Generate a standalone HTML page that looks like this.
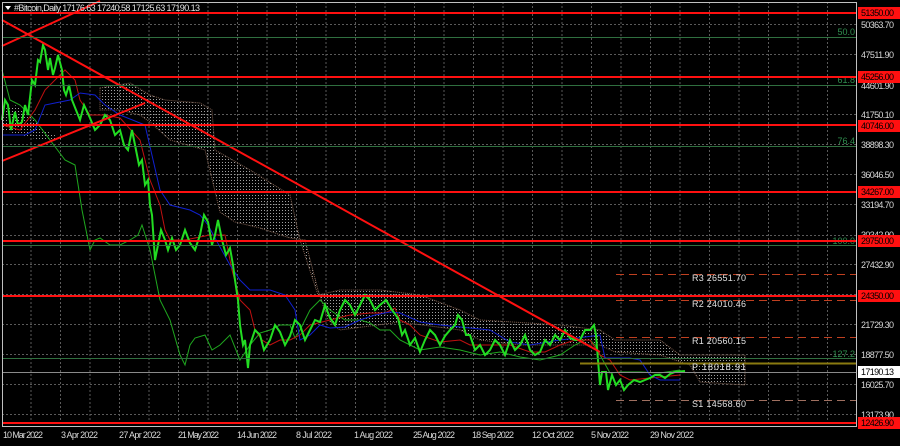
<!DOCTYPE html><html><head><style>
body{margin:0;background:#000;width:900px;height:441px;overflow:hidden;font-family:"Liberation Sans",sans-serif}
svg text{font-family:"Liberation Sans",sans-serif;font-size:9px}
</style></head><body>
<svg width="900" height="441" xmlns="http://www.w3.org/2000/svg">
<defs>
<pattern id="dots" width="3" height="3" patternUnits="userSpaceOnUse"><rect width="1" height="1" fill="#a0a0a0"/></pattern>
</defs>
<rect width="900" height="441" fill="#000"/>
<g stroke="#5a5a5a" stroke-dasharray="2,2" stroke-width="1">
<line x1="2" y1="24.5" x2="856" y2="24.5"/><line x1="2" y1="54.5" x2="856" y2="54.5"/><line x1="2" y1="85.5" x2="856" y2="85.5"/><line x1="2" y1="114.5" x2="856" y2="114.5"/><line x1="2" y1="144.5" x2="856" y2="144.5"/><line x1="2" y1="174.5" x2="856" y2="174.5"/><line x1="2" y1="204.5" x2="856" y2="204.5"/><line x1="2" y1="235.5" x2="856" y2="235.5"/><line x1="2" y1="264.5" x2="856" y2="264.5"/><line x1="2" y1="294.5" x2="856" y2="294.5"/><line x1="2" y1="324.5" x2="856" y2="324.5"/><line x1="2" y1="354.5" x2="856" y2="354.5"/><line x1="2" y1="384.5" x2="856" y2="384.5"/><line x1="2" y1="414.5" x2="856" y2="414.5"/>
<path d="M31 2V425M60.5 2V425M90 2V425M119.5 2V425M149 2V425M178.5 2V425M208 2V425M237.5 2V425M267 2V425M296.5 2V425M326 2V425M355.5 2V425M385 2V425M414.5 2V425M444 2V425M473.5 2V425M503 2V425M532.5 2V425M562 2V425M591.5 2V425M621 2V425M650.5 2V425M680 2V425M709.5 2V425M739 2V425M768.5 2V425M798 2V425M827.5 2V425"/>
</g>
<polygon fill="url(#dots)" stroke="#806050" stroke-width="1" stroke-dasharray="1,1" points="100,88 130,83 150,95 165,100 200,103 212,110 215,150 250,170 290,195 300,240 318,295 340,290 380,290 420,295 460,310 480,320 560,325 600,330 615,340 660,340 680,355 745,355 745,385 700,382 690,365 660,355 615,352 600,345 520,345 480,340 460,330 400,322 340,330 328,320 318,290 305,240 290,238 260,228 235,222 220,212 205,150 170,140 150,122 140,115 120,110 100,110"/>
<polygon fill="url(#dots)" points="2,110 15,105 30,115 45,130 60,138 80,128 60,140 40,140 20,135 2,130"/>
<polyline fill="none" stroke="#1fa81f" stroke-width="1" points="2,70 10,100 20,105 35,120 50,140 65,160 75,165 82,210 90,250 95,240 100,238 110,245 120,245 130,240 138,235 142,225 150,250 160,300 170,320 180,355 185,365 190,345 195,338 205,335 212,350 220,345 230,335 240,360 250,345 260,333 270,330 280,325 290,325 295,338 300,330 310,310 320,300 330,310 345,320 360,320 370,323 380,330 390,330 400,340 410,345 420,350 440,347 460,350 480,355 500,352 520,357 540,360 560,355 575,345 585,340 590,340 595,345 600,355 610,373 620,372 640,372 660,373 680,370"/>
<polyline fill="none" stroke="#c01010" stroke-width="1" points="2,125 20,130 35,110 45,90 55,80 65,70 75,80 80,100 90,115 105,115 120,118 140,140 150,180 160,205 165,230 170,240 185,240 195,238 210,235 225,235 232,270 240,300 250,310 255,330 262,340 270,345 280,340 290,340 300,335 310,325 330,320 350,315 370,313 385,313 395,308 400,320 410,325 420,335 440,342 460,340 470,345 490,345 510,345 530,352 545,352 560,345 575,340 590,340 600,355 610,360 620,375 630,380 650,378 680,375"/>
<polyline fill="none" stroke="#1020d0" stroke-width="1" points="2,135 25,135 35,130 45,105 55,103 70,100 80,93 95,95 105,105 120,115 145,125 160,190 170,205 190,210 200,215 208,225 215,238 230,265 240,280 250,290 270,290 285,295 295,310 300,340 310,335 320,325 330,328 345,327 360,320 375,315 390,312 400,313 420,322 440,325 470,328 490,330 510,342 530,345 560,340 585,337 600,335 605,358 630,358 640,360 650,375 660,380 680,380"/>
<polyline fill="none" stroke="#22dd22" stroke-width="2" points="2,120 5,100 8,105 11,130 15,112 18,125 22,122 25,105 28,115 32,80 35,85 38,60 40,62 43,45 45,50 48,70 50,58 53,75 55,68 58,55 62,70 64,90 66,95 69,85 72,100 76,110 80,120 84,105 90,118 95,130 100,125 105,115 110,120 115,135 120,130 124,145 128,150 132,130 135,145 139,165 142,160 145,185 148,180 150,205 152,215 155,260 158,245 161,230 165,240 168,250 172,238 176,250 180,245 185,230 190,243 195,250 200,235 204,215 208,222 212,245 215,235 218,220 222,240 226,255 230,248 233,265 235,280 238,300 240,325 243,345 245,340 248,368 250,345 255,330 260,335 264,350 270,340 275,325 280,332 285,345 290,336 295,320 300,325 305,340 310,330 315,320 320,322 325,305 330,318 335,325 340,310 345,300 350,305 355,315 360,305 365,295 370,300 375,310 380,305 386,300 392,310 398,318 402,335 405,330 410,345 415,338 420,352 425,340 430,330 435,335 440,345 445,336 450,330 455,325 458,315 462,320 466,335 470,335 475,350 480,345 485,355 490,350 495,340 500,345 505,355 510,340 515,350 520,345 525,335 530,350 535,355 540,352 545,340 550,345 555,335 560,340 565,330 570,338 575,340 580,340 585,330 590,330 594,325 596,335 598,360 600,385 602,372 606,372 608,390 612,375 616,385 620,380 624,390 628,385 634,380 640,382 645,380 650,378 655,375 660,375 665,378 670,374 675,372 685,371"/>
<g stroke="#ff1010" stroke-width="2" fill="none">
<line x1="2" y1="20" x2="600" y2="352"/>
<line x1="2" y1="46" x2="100" y2="1"/>
<line x1="2" y1="161" x2="145" y2="103"/>
</g>
<g stroke="#2f6f3f" stroke-width="1">
<line x1="2" y1="37.5" x2="856" y2="37.5"/><line x1="2" y1="85.5" x2="856" y2="85.5"/><line x1="2" y1="146.5" x2="856" y2="146.5"/><line x1="2" y1="245.5" x2="856" y2="245.5"/><line x1="2" y1="358.5" x2="856" y2="358.5"/>
</g>
<g fill="#2f8f4f" text-anchor="end"><text x="855" y="35">50.0</text><text x="855" y="83">61.8</text><text x="855" y="144">76.4</text><text x="855" y="244">100.0</text><text x="855" y="357">127.2</text></g>
<line x1="580" y1="363.5" x2="856" y2="363.5" stroke="#8a7a10" stroke-width="2"/>
<line x1="2" y1="372.5" x2="856" y2="372.5" stroke="#8a8a8a" stroke-width="1"/>
<g stroke="#ff1010" stroke-width="2">
<line x1="2" y1="13" x2="856" y2="13"/><line x1="2" y1="77" x2="856" y2="77"/><line x1="2" y1="125" x2="856" y2="125"/><line x1="2" y1="192" x2="856" y2="192"/><line x1="2" y1="241" x2="856" y2="241"/><line x1="2" y1="296" x2="856" y2="296"/><line x1="2" y1="423" x2="856" y2="423"/>
</g>
<g stroke-dasharray="8,5" stroke-width="1">
<line x1="616" y1="274.5" x2="856" y2="274.5" stroke="#c04020"/>
<line x1="616" y1="300.5" x2="856" y2="300.5" stroke="#c04020"/>
<line x1="616" y1="337.5" x2="856" y2="337.5" stroke="#c04020"/>
<line x1="616" y1="400.5" x2="856" y2="400.5" stroke="#a07060"/>
</g>
<g fill="#e0e0e0" style="font-family:'Liberation Mono',monospace;font-size:10px">
<text x="692" y="281" textLength="54">R3 26551.70</text><text x="692" y="307" textLength="54">R2 24010.46</text><text x="692" y="344" textLength="54">R1 20560.15</text><text x="692" y="370" textLength="54">P 18018.91</text><text x="692" y="407" textLength="54">S1 14568.60</text>
</g>
<line x1="2.5" y1="2" x2="2.5" y2="426" stroke="#c0c0c0"/>
<line x1="856.5" y1="2" x2="856.5" y2="426" stroke="#c0c0c0"/>
<line x1="2" y1="426.5" x2="857" y2="426.5" stroke="#c0c0c0"/>
<line x1="2" y1="2.5" x2="857" y2="2.5" stroke="#c0c0c0"/>
<g fill="#d8d8d8">
<text x="861" y="28" textLength="33">50363.70</text><text x="861" y="58" textLength="33">47511.90</text><text x="861" y="89" textLength="33">44601.90</text><text x="861" y="118" textLength="33">41750.10</text><text x="861" y="148" textLength="33">38898.30</text><text x="861" y="178" textLength="33">36046.50</text><text x="861" y="208" textLength="33">33194.70</text><text x="861" y="238" textLength="33">30342.90</text><text x="861" y="268" textLength="33">27432.90</text><text x="861" y="328" textLength="33">21729.30</text><text x="861" y="358" textLength="33">18877.50</text><text x="861" y="388" textLength="33">16025.70</text><text x="861" y="418" textLength="33">13173.90</text>
</g>
<g fill="#ff1010"><rect x="858" y="7" width="42" height="12"/><rect x="858" y="71" width="42" height="12"/><rect x="858" y="120" width="42" height="12"/><rect x="858" y="186" width="42" height="12"/><rect x="858" y="235" width="42" height="12"/><rect x="858" y="290" width="42" height="12"/><rect x="858" y="417" width="42" height="12"/></g>
<rect x="858" y="366" width="42" height="12" fill="#fff"/>
<g fill="#000"><text x="861" y="16" textLength="33">51350.00</text><text x="861" y="80" textLength="33">45256.00</text><text x="861" y="129" textLength="33">40746.00</text><text x="861" y="195" textLength="33">34267.00</text><text x="861" y="244" textLength="33">29750.00</text><text x="861" y="299" textLength="33">24350.00</text><text x="861" y="426" textLength="33">12426.90</text><text x="861" y="375" textLength="33">17190.13</text></g>
<g fill="#d8d8d8"><text x="3" y="438" textLength="40">10 Mar 2022</text><text x="61" y="438" textLength="37">3 Apr 2022</text><text x="119" y="438" textLength="42">27 Apr 2022</text><text x="178" y="438" textLength="41">21 May 2022</text><text x="237" y="438" textLength="40">14 Jun 2022</text><text x="296" y="438" textLength="36">8 Jul 2022</text><text x="354" y="438" textLength="39">1 Aug 2022</text><text x="413" y="438" textLength="42">25 Aug 2022</text><text x="472" y="438" textLength="42">18 Sep 2022</text><text x="532" y="438" textLength="42">12 Oct 2022</text><text x="591" y="438" textLength="38">5 Nov 2022</text><text x="650" y="438" textLength="44">29 Nov 2022</text></g>
<path d="M5 6 L11 6 L8 10 Z" fill="#fff"/>
<text x="14" y="11" fill="#e0e0e0" textLength="186">#Bitcoin,Daily  17176.63 17240.58 17125.63 17190.13</text>
</svg>
</body></html>
